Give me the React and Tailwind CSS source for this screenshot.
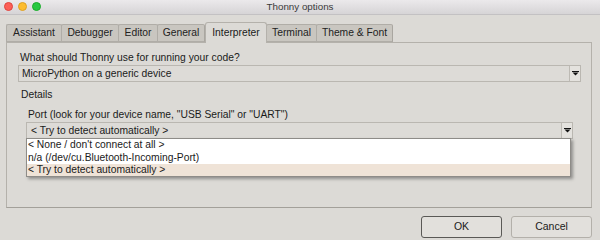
const font = { fontFamily: '"Liberation Sans", Arial, sans-serif' }

const tabs = [
  { name: 'Assistant', w: 56 },
  { name: 'Debugger', w: 58 },
  { name: 'Editor', w: 40 },
  { name: 'General', w: 48 },
  { name: 'Interpreter', w: 62, active: true },
  { name: 'Terminal', w: 51 },
  { name: 'Theme & Font', w: 77 },
]

const Arrow = () => (
  <div className="w-[11px] self-stretch flex items-center justify-center border-l border-[#bdbab4] bg-[#e4e2de]">
    <svg width="7" height="5" viewBox="0 0 7 5">
      <rect x="0" y="0" width="7" height="1" fill="#111" />
      <polygon points="0.5,1.5 6.5,1.5 3.5,4.5" fill="#111" />
    </svg>
  </div>
)

export default function App() {
  return (
    <div className="w-[600px] h-[240px] bg-[#dcdad6] text-[#1a1a1a] text-[10.3px] overflow-hidden flex flex-col" style={font}>
      {/* Title bar */}
      <div className="relative h-[15px] bg-gradient-to-b from-[#ebe9eb] to-[#d6d4d6] border-b border-[#c3c1c3] flex items-center justify-center">
        <div className="absolute left-[4px] top-[2px] flex gap-[5px]">
          <span className="w-[9px] h-[9px] rounded-full bg-[#fc5f57] border border-[#e0443e]"></span>
          <span className="w-[9px] h-[9px] rounded-full bg-[#fdbc2e] border border-[#dea123]"></span>
          <span className="w-[9px] h-[9px] rounded-full bg-[#28c840] border border-[#1aab29]"></span>
        </div>
        <span className="text-[9.8px] text-[#3a3a3a] leading-none">Thonny options</span>
      </div>

      {/* Tabs */}
      <div className="h-[27px] pl-[6px] flex items-end">
        {tabs.map((t) =>
          t.active ? (
            <div
              key={t.name}
              style={{ width: t.w }}
              className="h-[21px] -mb-px z-10 bg-[#dcdad6] border border-b-0 border-[#b4b1ab] rounded-t-[3px] flex items-center justify-center"
            >
              {t.name}
            </div>
          ) : (
            <div
              key={t.name}
              style={{ width: t.w }}
              className="h-[18px] bg-[#c9c6c0] border border-[#b0ada7] border-r-[#a9a6a0] -ml-px first:ml-0 rounded-t-[2px] flex items-center justify-center text-[#222]"
            >
              {t.name}
            </div>
          )
        )}
      </div>

      {/* Panel */}
      <div className="relative ml-[6px] mr-[8px] h-[166px] border border-[#b4b1ab] border-b-[#a3a09a] bg-[#dcdad6] px-[11px] pt-[9px]">
        <div className="pl-[2px] leading-[12px]">What should Thonny use for running your code?</div>
        <div className="mt-[1px] h-[17px] w-[563px] flex items-stretch border border-[#bab7b1] bg-[#dddbd7]">
          <div className="flex-1 flex items-center pl-[3px]">MicroPython on a generic device</div>
          <Arrow />
        </div>
        <div className="mt-[7px] pl-[3px] leading-[12px]">Details</div>
        <div className="mt-[8px] pl-[10px] leading-[12px]">Port (look for your device name, "USB Serial" or "UART")</div>
        <div className="relative ml-[8px] mt-[1px] w-[547px]">
          <div className="h-[17px] flex items-stretch border border-[#bab7b1] bg-[#dddbd7]">
            <div className="flex-1 flex items-center pl-[4px]">&lt; Try to detect automatically &gt;</div>
            <Arrow />
          </div>
          <div className="absolute left-0 top-[16px] w-[545px] bg-white border border-[#8e8c88] shadow-[2px_2px_3px_rgba(0,0,0,0.35)] z-20">
            <div className="h-[12px] leading-[12px] pl-[1px]">&lt; None / don't connect at all &gt;</div>
            <div className="h-[13px] leading-[13px] pl-[1px]">n/a (/dev/cu.Bluetooth-Incoming-Port)</div>
            <div className="h-[12px] leading-[12px] pl-[1px] bg-[#efe3d7]">&lt; Try to detect automatically &gt;</div>
          </div>
        </div>
      </div>

      {/* Buttons */}
      <div className="flex justify-end gap-[9px] pr-[8px] mt-[8px]">
        <button className="w-[81px] h-[22px] border border-[#5a5956] rounded-[3px] bg-[#e2e0dc] text-[10.5px]">OK</button>
        <button className="w-[81px] h-[22px] border border-[#b3b0aa] rounded-[3px] bg-[#e2e0dc] text-[10.5px]">Cancel</button>
      </div>
    </div>
  )
}
